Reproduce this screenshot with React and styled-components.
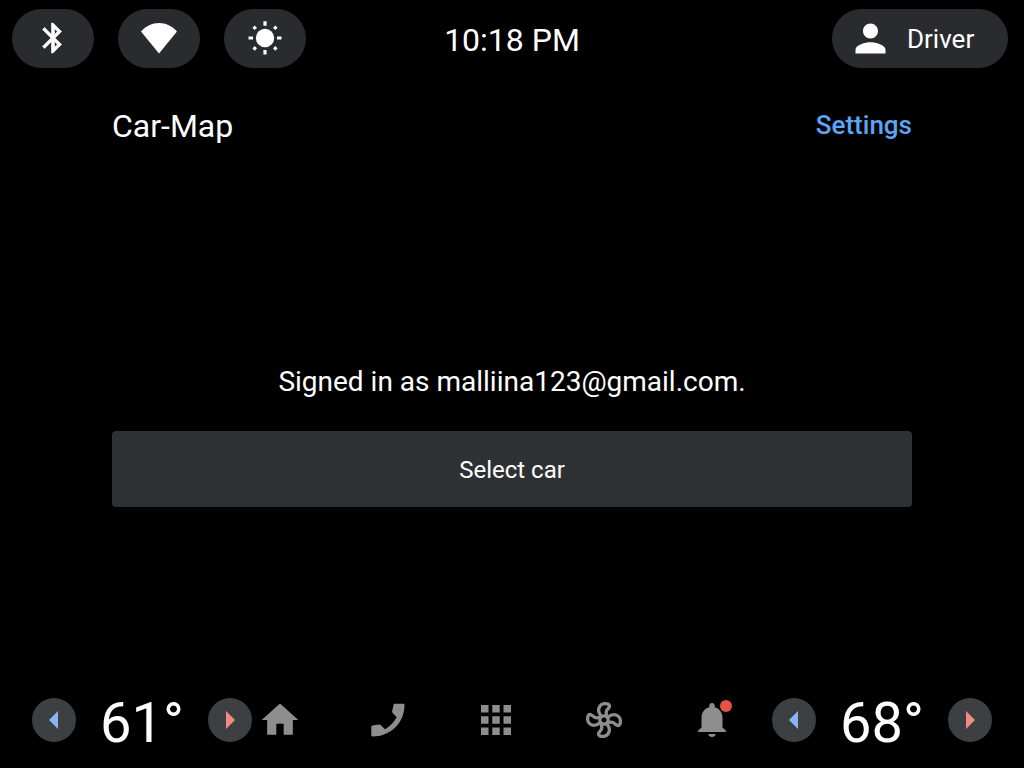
import React from "react";
import styled, { createGlobalStyle } from "styled-components";

const GlobalStyle = createGlobalStyle`
  * { box-sizing: border-box; }
  body {
    margin: 0;
    background: #000;
    color: #fff;
    font-family: Roboto, "Liberation Sans", sans-serif;
  }
  button { font-family: inherit; color: inherit; cursor: pointer; }
`;

const Screen = styled.div`
  min-height: 100vh;
  display: flex;
  flex-direction: column;
`;

const StatusBar = styled.header`
  display: grid;
  grid-template-columns: 1fr auto 1fr;
  align-items: center;
  height: 77px;
  padding: 0 12px;
`;

const QuickControls = styled.div`
  display: flex;
  gap: 24px;
`;

const Pill = styled.button`
  display: flex;
  align-items: center;
  justify-content: center;
  width: 82px;
  height: 59px;
  padding: 0 0 2px;
  border: 0;
  border-radius: 30px;
  background: #2a2b2e;
`;

const ProfilePill = styled(Pill)`
  justify-content: flex-start;
  gap: 14px;
  width: 176px;
  padding: 0 16px;
  font-size: 26px;
  line-height: 32px;
`;

const Clock = styled.time`
  font-size: 32px;
  line-height: 40px;
  padding-top: 2px;
`;

const ProfileArea = styled.div`
  display: flex;
  justify-content: flex-end;
  padding-right: 4px;
`;

const AppHeader = styled.div`
  display: flex;
  align-items: center;
  justify-content: space-between;
  height: 96px;
  padding: 0 112px;
`;

const Title = styled.h1`
  margin: 0;
  padding-top: 2px;
  font-size: 32px;
  line-height: 40px;
  font-weight: 400;
`;

const SettingsLink = styled.a`
  color: #5ba5f5;
  font-size: 26px;
  line-height: 32px;
  font-weight: 500;
  text-decoration: none;
`;

const Main = styled.main`
  flex: 1;
  display: flex;
  flex-direction: column;
  justify-content: center;
  gap: 32px;
  padding: 26px 112px 0;
`;

const Message = styled.p`
  margin: 0;
  font-size: 28px;
  line-height: 34px;
  text-align: center;
`;

const PrimaryButton = styled.button`
  width: 100%;
  height: 76px;
  padding: 2px 0 0;
  border: 0;
  border-radius: 4px;
  background: #2e3134;
  font-size: 24px;
  line-height: 32px;
`;

const BottomBar = styled.footer`
  display: flex;
  align-items: center;
  height: 96px;
  padding: 0 32px;
`;

const Climate = styled.div`
  display: flex;
  align-items: center;
  justify-content: space-between;
  width: 220px;
`;

const RoundButton = styled.button`
  display: flex;
  align-items: center;
  justify-content: center;
  width: 44px;
  height: 44px;
  padding: 0;
  border: 0;
  border-radius: 50%;
  background: #3c4043;
`;

const Temperature = styled.output`
  font-size: 56px;
  line-height: 64px;
  padding-top: 6px;
`;

const Nav = styled.nav`
  flex: 1;
  display: flex;
  justify-content: space-between;
  margin-right: 32px;
`;

const NavButton = styled.button`
  position: relative;
  display: flex;
  align-items: center;
  justify-content: center;
  width: 56px;
  height: 56px;
  padding: 0;
  border: 0;
  background: transparent;
  color: #8e8e8e;
`;

const Badge = styled.span`
  position: absolute;
  top: 8px;
  right: 8px;
  width: 12px;
  height: 12px;
  border-radius: 50%;
  background: #e65243;
`;

const Icon = ({ size, box = 24, children }) => (
  <svg width={size} height={size} viewBox={`0 0 ${box} ${box}`} fill="currentColor" aria-hidden="true">
    {children}
  </svg>
);

const BluetoothIcon = () => (
  <Icon size={36}>
    <path
      d="M17.71 7.71L12 2h-1v7.59L6.41 5 5 6.41 10.59 12 5 17.59 6.41 19 11 14.41V22h1l5.71-5.71-4.3-4.29 4.3-4.29zM13 5.83l1.88 1.88L13 9.59V5.83zm1.88 10.46L13 18.17v-3.76l1.88 1.88z"
      stroke="currentColor"
      strokeWidth=".4"
    />
  </Icon>
);

const WifiIcon = () => (
  <Icon size={36} box={36}>
    <path d="M18 33.500L0 11.500C5 6 11 3 18 3s13 3 18 8.500z" />
  </Icon>
);

const BrightnessIcon = () => (
  <Icon size={36} box={36}>
    <circle cx="18" cy="18" r="9.200" />
    <path
      d="M18 1.300v4.500M18 30v4.500M1.500 18H6M30 18h4.500M6.600 6.600l2.200 2.400M29.400 6.600l-2.200 2.400M6.600 29.600l2.200-2.400M29.400 29.600l-2.200-2.400"
      stroke="currentColor"
      strokeWidth="3.200"
    />
  </Icon>
);

const PersonIcon = () => (
  <Icon size={45}>
    <path d="M12 12c2.210 0 4-1.790 4-4s-1.790-4-4-4-4 1.790-4 4 1.790 4 4 4zm0 2c-2.670 0-8 1.340-8 4v2h16v-2c0-2.660-5.330-4-8-4z" />
  </Icon>
);

const HomeIcon = () => (
  <Icon size={44}>
    <path d="M10 20v-6h4v6h5v-8h3L12 3 2 12h3v8z" />
  </Icon>
);

const PhoneIcon = () => (
  <Icon size={44} box={44}>
    <path d="M38.500 7c0 18-14 31.500-32 31.500-.8 0-1.200-.5-1.200-1.200v-8.200c0-.8.400-1.300 1.200-1.500l6.500-1.100c.6-.1 1.200.1 1.600.5l4.600 4.200c5-3.200 8.600-7 11.500-12l-4.200-4.500c-.4-.4-.5-.9-.4-1.500L27.500 7c.1-.8.600-1.300 1.400-1.300h8.300c.8 0 1.300.5 1.300 1.300z" />
  </Icon>
);

const AppsIcon = () => (
  <Icon size={44}>
    <path
      d="M4 8h4V4H4v4zm6 12h4v-4h-4v4zm-6 0h4v-4H4v4zm0-6h4v-4H4v4zm6 0h4v-4h-4v4zm6-10v4h4V4h-4zm-6 4h4V4h-4v4zm6 6h4v-4h-4v4zm0 6h4v-4h-4v4z"
      transform="translate(12 12) scale(1.022) translate(-12 -12)"
    />
  </Icon>
);

const FanIcon = () => (
  <Icon size={44} box={44}>
    <g transform="translate(22 22)" fill="none" stroke="currentColor" strokeWidth="3.300" strokeLinejoin="round">
      <circle r="4.200" />
      {[0, 90, 180, 270].map((angle) => (
        <path
          key={angle}
          d="M-2.500-3.500C-5.500-7-6.200-11-4-14C-2-16.700 2-17 4.500-15.700C6.500-14.300 5-12 3.300-10.300C2-9 2-6 3-3"
          transform={`rotate(${angle})`}
        />
      ))}
    </g>
  </Icon>
);

const BellIcon = () => (
  <Icon size={44} box={44}>
    <path d="M22 5c1.600 0 2.700 1.200 2.700 2.700v1.500c5 1.300 7.800 5.500 7.800 10.600v9.700l3.500 3.300V34H8v-1.200l3.500-3.300v-9.700c0-5.100 2.800-9.300 7.800-10.600V7.700C19.300 6.200 20.400 5 22 5zM18.500 36h7c0 1.800-1.600 3-3.500 3s-3.500-1.200-3.500-3z" />
  </Icon>
);

const Arrow = ({ warm }) => (
  <svg width="10" height="18" viewBox="0 0 10 18" aria-hidden="true">
    <path d={warm ? "M1 0l9 9-9 9z" : "M9 0L0 9l9 9z"} fill={warm ? "#f28b82" : "#8ab4f8"} />
  </svg>
);

const ClimateControl = ({ label, value }) => (
  <Climate role="group" aria-label={label}>
    <RoundButton aria-label="Cooler">
      <Arrow />
    </RoundButton>
    <Temperature>{value}°</Temperature>
    <RoundButton aria-label="Warmer">
      <Arrow warm />
    </RoundButton>
  </Climate>
);

const quickControls = [
  { label: "Bluetooth", Glyph: BluetoothIcon },
  { label: "Wi-Fi", Glyph: WifiIcon },
  { label: "Brightness", Glyph: BrightnessIcon },
];

const navItems = [
  { label: "Home", Glyph: HomeIcon },
  { label: "Phone", Glyph: PhoneIcon },
  { label: "Apps", Glyph: AppsIcon },
  { label: "Climate", Glyph: FanIcon },
  { label: "Notifications", Glyph: BellIcon, badge: true },
];

export default function App() {
  return (
    <Screen>
      <GlobalStyle />
      <StatusBar>
        <QuickControls>
          {quickControls.map(({ label, Glyph }) => (
            <Pill key={label} aria-label={label}>
              <Glyph />
            </Pill>
          ))}
        </QuickControls>
        <Clock>10:18 PM</Clock>
        <ProfileArea>
          <ProfilePill>
            <PersonIcon />
            Driver
          </ProfilePill>
        </ProfileArea>
      </StatusBar>
      <AppHeader>
        <Title>Car-Map</Title>
        <SettingsLink href="#settings">Settings</SettingsLink>
      </AppHeader>
      <Main>
        <Message>Signed in as malliina123@gmail.com.</Message>
        <PrimaryButton>Select car</PrimaryButton>
      </Main>
      <BottomBar>
        <ClimateControl label="Driver temperature" value={61} />
        <Nav>
          {navItems.map(({ label, Glyph, badge }) => (
            <NavButton key={label} aria-label={label}>
              <Glyph />
              {badge && <Badge />}
            </NavButton>
          ))}
        </Nav>
        <ClimateControl label="Passenger temperature" value={68} />
      </BottomBar>
    </Screen>
  );
}
